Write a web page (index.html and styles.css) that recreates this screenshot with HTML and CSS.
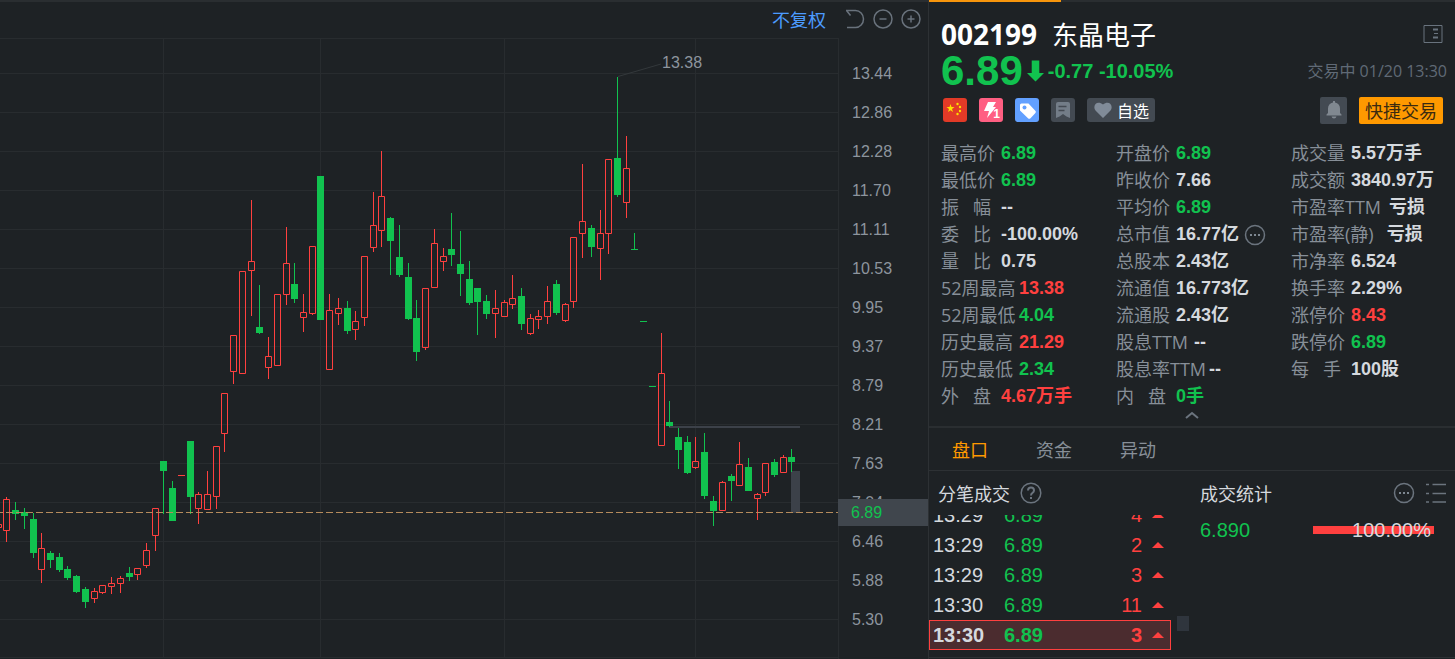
FILE: index.html
```html
<!DOCTYPE html>
<html lang="zh-CN">
<head>
<meta charset="utf-8">
<title>东晶电子 002199</title>
<link rel="stylesheet" href="styles.css">
</head>
<body>
<main class="app">
  <section class="chart" aria-label="K线图">
    <div class="toolbar">
      <button class="adjust" type="button">不复权</button>
      <button class="tool" type="button" aria-label="撤销"><svg width="20" height="20" viewBox="0 0 20 20"><path d="M1.500 1.500l4 5M1 1.500h9.500a8 8.500 0 0 1 0 17H2"/></svg></button>
      <button class="tool" type="button" aria-label="缩小"><svg width="20" height="20" viewBox="0 0 20 20"><circle cx="10" cy="10" r="9"/><path d="M6.500 10h7"/></svg></button>
      <button class="tool" type="button" aria-label="放大"><svg width="20" height="20" viewBox="0 0 20 20"><circle cx="10" cy="10" r="9"/><path d="M6.500 10h7M10 6.500v7"/></svg></button>
    </div>
    <div class="plot-row">
      <svg class="plot" id="plot" viewBox="0 38 838 621" preserveAspectRatio="none"></svg>
      <div class="axis">
        <span>13.44</span><span>12.86</span><span>12.28</span><span>11.70</span><span>11.11</span><span>10.53</span><span>9.95</span><span>9.37</span><span>8.79</span><span>8.21</span><span>7.63</span><span>7.04</span><span>6.46</span><span>5.88</span><span>5.30</span>
        <b class="price-tag">6.89</b>
      </div>
    </div>
  </section>

  <aside class="panel">
    <header class="head">
      <div class="title-row">
        <h1><strong>002199</strong><span>东晶电子</span></h1>
        <button class="bare" type="button" aria-label="布局"><svg width="20" height="20" viewBox="0 0 20 20" fill="none" stroke="#69737e"><path d="M1 1.500h18v17H1z"/><path d="M10 5.500h5M10 13.500h5" stroke-width="2"/><path d="M11 9.500h4"/></svg></button>
      </div>
      <div class="quote-row">
        <span class="last">6.89</span>
        <svg width="17" height="22" viewBox="0 0 18 22"><path d="M5 0h8v13h5l-9 9-9-9h5z" fill="#11c24f"/></svg>
        <span class="change">-0.77 -10.05%</span>
        <time class="time">交易中 01/20 13:30</time>
      </div>
      <div class="action-row">
        <span class="badge flag"><svg width="24" height="24" viewBox="0 0 24 24" fill="#ffde00"><path d="M7.500 6l1 3h3L9 11l1 3-2.500-1.800L5 14l1-3-2.500-2h3z"/><circle cx="14.500" cy="6" r="1.200"/><circle cx="17" cy="9" r="1.200"/><circle cx="17" cy="13" r="1.200"/><circle cx="14.500" cy="16" r="1.200"/></svg></span>
        <span class="badge bolt"><svg width="24" height="24" viewBox="0 0 24 24"><path d="M9 4h8l-3 5h3L8 20l2-7H5z" fill="#fff"/></svg><i>1</i></span>
        <span class="badge tag"><svg width="24" height="24" viewBox="0 0 24 24"><path d="M6.500 5.500l7 0 7 7.500q1 1-.3 2.200l-4.700 5q-1.300 1.300-2.500 0L5 12.500v-5.500q0-1.500 1.500-1.500z" fill="#fff"/><circle cx="9.500" cy="9.500" r="2" fill="#62a0ff"/></svg></span>
        <span class="badge note"><svg width="24" height="24" viewBox="0 0 24 24"><path d="M5 6q0-2 2-2h10q2 0 2 2v14l-3.500-1.500L12 16l-3.500 2.500L5 20z" fill="#737d88"/><path d="M7.500 8.500h8M7.500 12.500h6" stroke="#434a52" stroke-width="1.500"/></svg></span>
        <button class="fav" type="button"><svg width="18" height="16" viewBox="0 0 18 16"><path d="M9 16L1.500 8.500C-2 4 3-2.500 9 2.500c6-5 11 1.500 7.500 6z" fill="#808b98"/></svg>自选</button>
        <button class="bell" type="button" aria-label="提醒"><svg width="16" height="18" viewBox="0 0 16 18" fill="#808890"><path d="M7 0h2v1.500c3 .5 5 2.500 5 6V12l1.500 1.500V14.500H.5v-1L2 12V7.500c0-3.500 2-5.500 5-6zM5.500 15.500h5Q10 17.500 8 17.500T5.500 15.500z"/></svg></button>
        <button class="trade" type="button">快捷交易</button>
      </div>
    </header>

    <div class="stats">
      <dl>
        <div><dt>最高价</dt><dd class="down">6.89</dd></div>
        <div><dt>最低价</dt><dd class="down">6.89</dd></div>
        <div><dt>振&nbsp;&nbsp;&nbsp;幅</dt><dd>--</dd></div>
        <div><dt>委&nbsp;&nbsp;&nbsp;比</dt><dd>-100.00%</dd></div>
        <div><dt>量&nbsp;&nbsp;&nbsp;比</dt><dd>0.75</dd></div>
        <div><dt class="wide">52周最高</dt><dd class="up">13.38</dd></div>
        <div><dt class="wide">52周最低</dt><dd class="down">4.04</dd></div>
        <div><dt class="wide">历史最高</dt><dd class="up">21.29</dd></div>
        <div><dt class="wide">历史最低</dt><dd class="down">2.34</dd></div>
        <div><dt>外&nbsp;&nbsp;&nbsp;盘</dt><dd class="up">4.67万手</dd></div>
      </dl>
      <dl>
        <div><dt>开盘价</dt><dd class="down">6.89</dd></div>
        <div><dt>昨收价</dt><dd>7.66</dd></div>
        <div><dt>平均价</dt><dd class="down">6.89</dd></div>
        <div><dt>总市值</dt><dd class="with-button">16.77亿<button class="bare" type="button" aria-label="更多"><svg width="22" height="22" viewBox="0 0 22 22"><circle cx="11" cy="11" r="9.500" fill="none" stroke="#6b747e" stroke-width="1.500"/><path d="M6 10h2v2H6zM10 10h2v2h-2zM14 10h2v2h-2z" fill="#7d8791"/></svg></button></dd></div>
        <div><dt>总股本</dt><dd>2.43亿</dd></div>
        <div><dt>流通值</dt><dd>16.773亿</dd></div>
        <div><dt>流通股</dt><dd>2.43亿</dd></div>
        <div><dt class="wide">股息TTM</dt><dd>--</dd></div>
        <div><dt>股息率TTM</dt><dd>--</dd></div>
        <div><dt>内&nbsp;&nbsp;&nbsp;盘</dt><dd class="down">0手</dd></div>
      </dl>
      <dl>
        <div><dt>成交量</dt><dd>5.57万手</dd></div>
        <div><dt>成交额</dt><dd>3840.97万</dd></div>
        <div><dt>市盈率TTM</dt><dd>&nbsp;亏损</dd></div>
        <div><dt>市盈率(静)</dt><dd>&nbsp;&nbsp;亏损</dd></div>
        <div><dt>市净率</dt><dd>6.524</dd></div>
        <div><dt>换手率</dt><dd>2.29%</dd></div>
        <div><dt>涨停价</dt><dd class="up">8.43</dd></div>
        <div><dt>跌停价</dt><dd class="down">6.89</dd></div>
        <div><dt>每&nbsp;&nbsp;&nbsp;手</dt><dd>100股</dd></div>
      </dl>
    </div>
    <button class="bare collapse" type="button" aria-label="收起"><svg width="16" height="10" viewBox="0 0 16 10"><path d="M2 8l6-5 6 5" fill="none" stroke="#6b747e" stroke-width="2"/></svg></button>

    <nav class="tabs">
      <button class="tab active" type="button">盘口</button>
      <button class="tab" type="button">资金</button>
      <button class="tab" type="button">异动</button>
    </nav>

    <div class="detail">
      <section class="ticks">
        <h2>分笔成交
          <button class="bare" type="button" aria-label="帮助"><svg width="22" height="22" viewBox="0 0 22 22" fill="none" stroke="#6b747e" stroke-width="1.500"><circle cx="11" cy="11" r="9.800"/><path d="M8 8.500Q8 5.500 11 5.500T14 8.500Q14 10 12.500 10.800T11 13.500M11 15v2" stroke-width="2"/></svg></button>
        </h2>
        <div class="tick-list">
          <table>
            <tr><td>13:29</td><td class="down">6.89</td><td class="vol">4</td><td class="dir"><i></i></td></tr>
            <tr><td>13:29</td><td class="down">6.89</td><td class="vol">2</td><td class="dir"><i></i></td></tr>
            <tr><td>13:29</td><td class="down">6.89</td><td class="vol">3</td><td class="dir"><i></i></td></tr>
            <tr><td>13:30</td><td class="down">6.89</td><td class="vol">11</td><td class="dir"><i></i></td></tr>
            <tr class="selected"><td>13:30</td><td class="down">6.89</td><td class="vol">3</td><td class="dir"><i></i></td></tr>
          </table>
          <span class="thumb"></span>
        </div>
      </section>
      <section class="volume">
        <h2>成交统计
          <span class="tools">
            <button class="bare" type="button" aria-label="更多"><svg width="22" height="22" viewBox="0 0 22 22"><circle cx="11" cy="11" r="9.500" fill="none" stroke="#6b747e" stroke-width="1.500"/><path d="M6 10h2v2H6zM10 10h2v2h-2zM14 10h2v2h-2z" fill="#7d8791"/></svg></button>
            <button class="bare" type="button" aria-label="列表"><svg width="20" height="20" viewBox="0 0 20 20"><path d="M0 1.500h3M6.500 1.500H20M0 10.500h3M6.500 10.500H20M0 19h3M6.500 19H20" stroke="#6b747e" stroke-width="1.500"/></svg></button>
          </span>
        </h2>
        <div class="vol-row"><span class="down">6.890</span><span class="bar">100.00%</span></div>
      </section>
    </div>
  </aside>
</main>
<script src="chart.js"></script>
</body>
</html>
```
FILE: styles.css
```css
* { box-sizing: border-box; }
body {
  margin: 0;
  background: #1e2225;
  color: #d5d9de;
  font-family: "Liberation Sans", "Noto Sans CJK SC", sans-serif;
}
button { border: 0; padding: 0; background: none; color: inherit; font: inherit; cursor: pointer; }
svg { display: block; }
h1, h2, dl, dd { margin: 0; font-weight: normal; }
.up { color: #ff403f; }
.down { color: #11c24f; }

.app { display: flex; min-height: 100vh; }
.chart { flex: 928; display: flex; flex-direction: column; border-top: 2px solid #2a2e31; }
.toolbar { height: 36px; display: flex; align-items: center; justify-content: flex-end; gap: 8px; padding: 0 7px 3px 0; }
.adjust { color: #4c9bff; font: 18px/24px "Noto Sans CJK SC", sans-serif; margin-right: 11px; }
.tool svg { fill: none; stroke: #69727c; stroke-width: 1.500; }
.plot-row { flex: 1; display: flex; min-height: 0; }
.plot { flex: 1; min-width: 0; height: 621px; min-height: 100%; }
.callout { font: 16px "Liberation Sans", sans-serif; fill: #8d959e; }
.axis { position: relative; width: 90px; display: flex; flex-direction: column; padding: 16px 0 19px 13px; border-left: 1px solid #282c2f; color: #8d959e; font-size: 16px; }
.axis > span { flex: 1; display: flex; align-items: center; }
.price-tag { position: absolute; left: -1px; right: 0; top: 461px; padding-left: 13px; background: #40464d; color: #11c24f; font-weight: normal; line-height: 27px; }

.panel { flex: 527; min-width: 520px; display: flex; flex-direction: column; border-left: 1px solid #2d3134; }
.panel::before { content: ""; height: 2px; background: linear-gradient(90deg, #f7950c 132px, #2a2e31 132px); }
.head { padding: 11px 12px 0; }
.title-row { display: flex; align-items: center; justify-content: space-between; height: 42px; }
.title-row h1 { display: flex; align-items: center; gap: 15px; color: #fff; font: 28px/32px "Open Sans", sans-serif; }
.title-row h1 span { font: 26px/32px "Noto Sans CJK SC", sans-serif; }
.quote-row { display: flex; align-items: center; height: 32px; gap: 4px; color: #11c24f; font-weight: bold; }
.last { font-size: 42px; line-height: 32px; }
.change { font-size: 20px; }
.time { margin: 0 -4px 0 auto; color: #606a76; font: 16px/24px "Open Sans", "Noto Sans CJK SC", sans-serif; }
.action-row { display: flex; align-items: center; gap: 12px; height: 46px; padding-left: 2px; }
.badge { position: relative; width: 24px; height: 24px; border-radius: 3px; }
.flag { background: #e23a27; }
.bolt { background: #ff5f82; }
.bolt i { position: absolute; right: 3px; bottom: 1px; color: #fff; font: bold 12px/14px "Liberation Sans", sans-serif; }
.tag { background: #62a0ff; }
.note { background: #434a52; }
.fav { display: flex; align-items: center; gap: 5px; height: 24px; padding: 0 6px 0 7px; border-radius: 3px; background: #434a52; color: #fff; font: 16px/24px "Noto Sans CJK SC", sans-serif; }
.bell { display: grid; place-items: center; width: 27px; height: 27px; margin-left: auto; border-radius: 2px; background: #434a52; }
.trade { height: 27px; padding: 0 6px; border-radius: 2px; background: #ff9900; color: #3b2a10; font: 18px/27px "Noto Sans CJK SC", sans-serif; }

.stats { display: grid; grid-template-columns: 175px 175px auto; padding: 7px 0 0 12px; white-space: nowrap; }
.stats dl > div { display: flex; align-items: center; height: 27px; }
.stats dt { min-width: 60px; padding-right: 3px; color: #878f98; font: 18px/27px "Open Sans", "Noto Sans CJK SC", sans-serif; }
.stats dt.wide { min-width: 78px; }
.stats dd { font-size: 18px; font-weight: bold; line-height: 27px; }
.stats .with-button { display: flex; align-items: center; gap: 5px; }
.collapse { align-self: center; height: 17px; display: flex; margin-bottom: -1px; }

.tabs { display: flex; gap: 48px; height: 45px; padding-left: 23px; border-top: 2px solid #2a2e31; border-bottom: 1px solid #2d3134; }
.tab { color: #878f98; font: 18px/24px "Noto Sans CJK SC", sans-serif; }
.tab.active { color: #ff9900; }

.detail { flex: 1; display: flex; border-bottom: 1px solid #2d3134; margin-bottom: 1px; }
h2 { display: flex; align-items: center; gap: 10px; height: 44px; font: 18px/24px "Noto Sans CJK SC", sans-serif; }
.ticks { width: 260px; }
.ticks h2 { padding-left: 9px; }
.tick-list { display: flex; align-items: flex-end; gap: 6px; height: 135px; overflow: hidden; font-size: 20px; }
.tick-list table { width: 242px; border-collapse: collapse; }
.tick-list td { height: 30px; padding: 0; line-height: 28px; }
.tick-list td:first-child { width: 75px; padding-left: 4px; }
.vol { color: #ff403f; text-align: right; }
.tick-list .dir { width: 29px; }
.dir i { display: block; margin-left: 10px; border: 6px solid transparent; border-top: 0; border-bottom-color: #ff403f; width: 0; }
.selected { background: #4b2c2f; outline: 1px solid #ff403f; outline-offset: -1px; font-weight: bold; }
.thumb { width: 12px; height: 15px; margin-bottom: 19px; background: #2f353d; }
.volume { flex: 1; padding: 0 9px 0 11px; }
.tools { display: flex; align-items: center; gap: 11px; margin-left: auto; }
.vol-row { display: flex; justify-content: space-between; padding-right: 12px; font-size: 20px; line-height: 30px; }
.bar { width: 121px; padding-right: 3px; text-align: right; background: linear-gradient(#ff403f, #ff403f) center / 100% 8px no-repeat; }
```
FILE: chart.js
```js
// Each candle: centre x, high, body top, body bottom, low, rising (1) or falling (0).
const candles = [
  [-2,524,524,528,528,1],[6,497,499,531,542,1],[15,502,510,514,520,0],[24,508,512,516,529,0],
  [33,513,519,553,558,0],[41,533,548,570,583,1],[50,551,553,560,568,0],[59,553,557,570,572,0],
  [67,566,569,578,580,0],[76,575,576,592,593,0],[85,587,589,602,608,0],[94,588,591,599,603,1],
  [102,585,585,593,594,1],[111,577,583,587,594,1],[120,576,578,584,593,1],[129,567,573,577,581,0],
  [137,568,568,575,580,1],[146,543,550,566,568,1],[155,508,508,536,551,1],[163,461,461,471,514,0],
  [172,481,488,521,521,0],[181,475,475,476,476,1],[190,441,441,497,514,0],[198,492,494,509,524,1],
  [207,471,494,510,510,1],[216,446,446,497,509,1],[224,393,393,434,452,1],[233,335,335,372,384,1],
  [242,271,271,374,374,1],[251,200,261,271,316,1],[259,285,327,333,334,0],[268,337,356,368,379,1],
  [277,294,294,366,366,1],[286,227,263,295,305,1],[294,263,284,299,303,0],[303,294,312,318,332,1],
  [312,246,246,314,315,1],[320,176,176,320,320,0],[329,294,310,370,370,1],[338,298,308,314,325,1],
  [347,301,308,331,334,0],[355,311,321,330,340,1],[364,256,256,318,326,1],[373,192,225,248,252,1],
  [381,151,196,231,247,1],[390,217,218,241,275,0],[399,225,257,275,277,0],[408,263,277,319,320,0],
  [416,300,318,352,361,0],[425,288,288,348,350,1],[434,229,243,288,288,1],[443,248,256,262,271,1],
  [451,213,249,255,266,0],[460,231,264,274,296,0],[469,261,279,303,305,0],[477,288,288,302,335,0],
  [486,295,301,314,319,0],[495,290,308,314,338,1],[504,300,302,317,317,1],[512,275,298,305,309,1],
  [521,288,296,324,330,0],[530,314,318,334,335,1],[538,310,316,320,329,1],[547,286,301,317,324,1],
  [556,280,284,313,315,0],[565,303,304,321,322,1],[573,237,237,302,308,1],[582,164,221,234,258,1],
  [591,225,228,247,257,0],[600,210,233,249,280,1],[608,159,159,234,254,1],[617,77,158,195,197,0],
  [626,136,168,203,218,1],[634,233,249,250,250,0],[643,321,321,322,322,0],[652,386,386,387,387,0],
  [661,333,373,446,446,1],[669,401,422,426,427,0],[678,428,437,450,469,0],[687,436,442,473,474,0],
  [695,437,461,468,469,1],[704,433,452,496,499,0],[713,496,501,511,526,0],[722,481,482,511,511,1],
  [731,474,476,481,501,0],[739,442,464,486,486,1],[748,458,467,491,491,0],[757,493,494,499,520,1],
  [765,463,463,493,496,1],[774,459,462,475,477,0],[783,455,457,473,473,1],[791,449,457,462,472,0]
];

const gridRows = [38];
for (let y = 73; y <= 619; y += 39) gridRows.push(y);
const gridColumns = [163, 320, 504, 695];

let grid = "";
gridRows.forEach(y => { grid += `M0 ${y + 0.5}H838`; });
grid += "M0 657.5H838";
gridColumns.forEach(x => { grid += `M${x + 0.5} 38V658`; });

let rising = "", falling = "", risingWicks = "", fallingWicks = "";
candles.forEach(([x, high, top, bottom, low, up]) => {
  const left = x - 3, height = bottom - top;
  if (up) {
    risingWicks += `M${x} ${high}h1V${top}h-1zM${x} ${bottom}h1V${low}h-1z`;
    if (height === 1) risingWicks += `M${left} ${top}h7v1h-7z`;
    else rising += `M${left + 0.5} ${top + 0.5}h6v${height - 1}h-6z`;
  } else {
    fallingWicks += `M${x} ${high}h1V${low}h-1z`;
    falling += `M${left} ${top}h7v${height}h-7z`;
  }
});

document.getElementById("plot").innerHTML = `
  <path d="${grid}" fill="none" stroke="#282c2f"/>
  <path d="M669 426H800V428H669zM791 471H800V513H791z" fill="#3c4149"/>
  <path d="${risingWicks}" fill="#ff403f"/>
  <path d="${rising}" fill="none" stroke="#ff403f"/>
  <path d="${fallingWicks}" fill="#11c24f"/>
  <path d="${falling}" fill="#11c24f"/>
  <path d="M-4 512.5H838" stroke="#b58b5c" stroke-dasharray="7 3"/>
  <path d="M618 76.5L661 64" stroke="#33383b"/>
  <text class="callout" x="662" y="68">13.38</text>`;
```
